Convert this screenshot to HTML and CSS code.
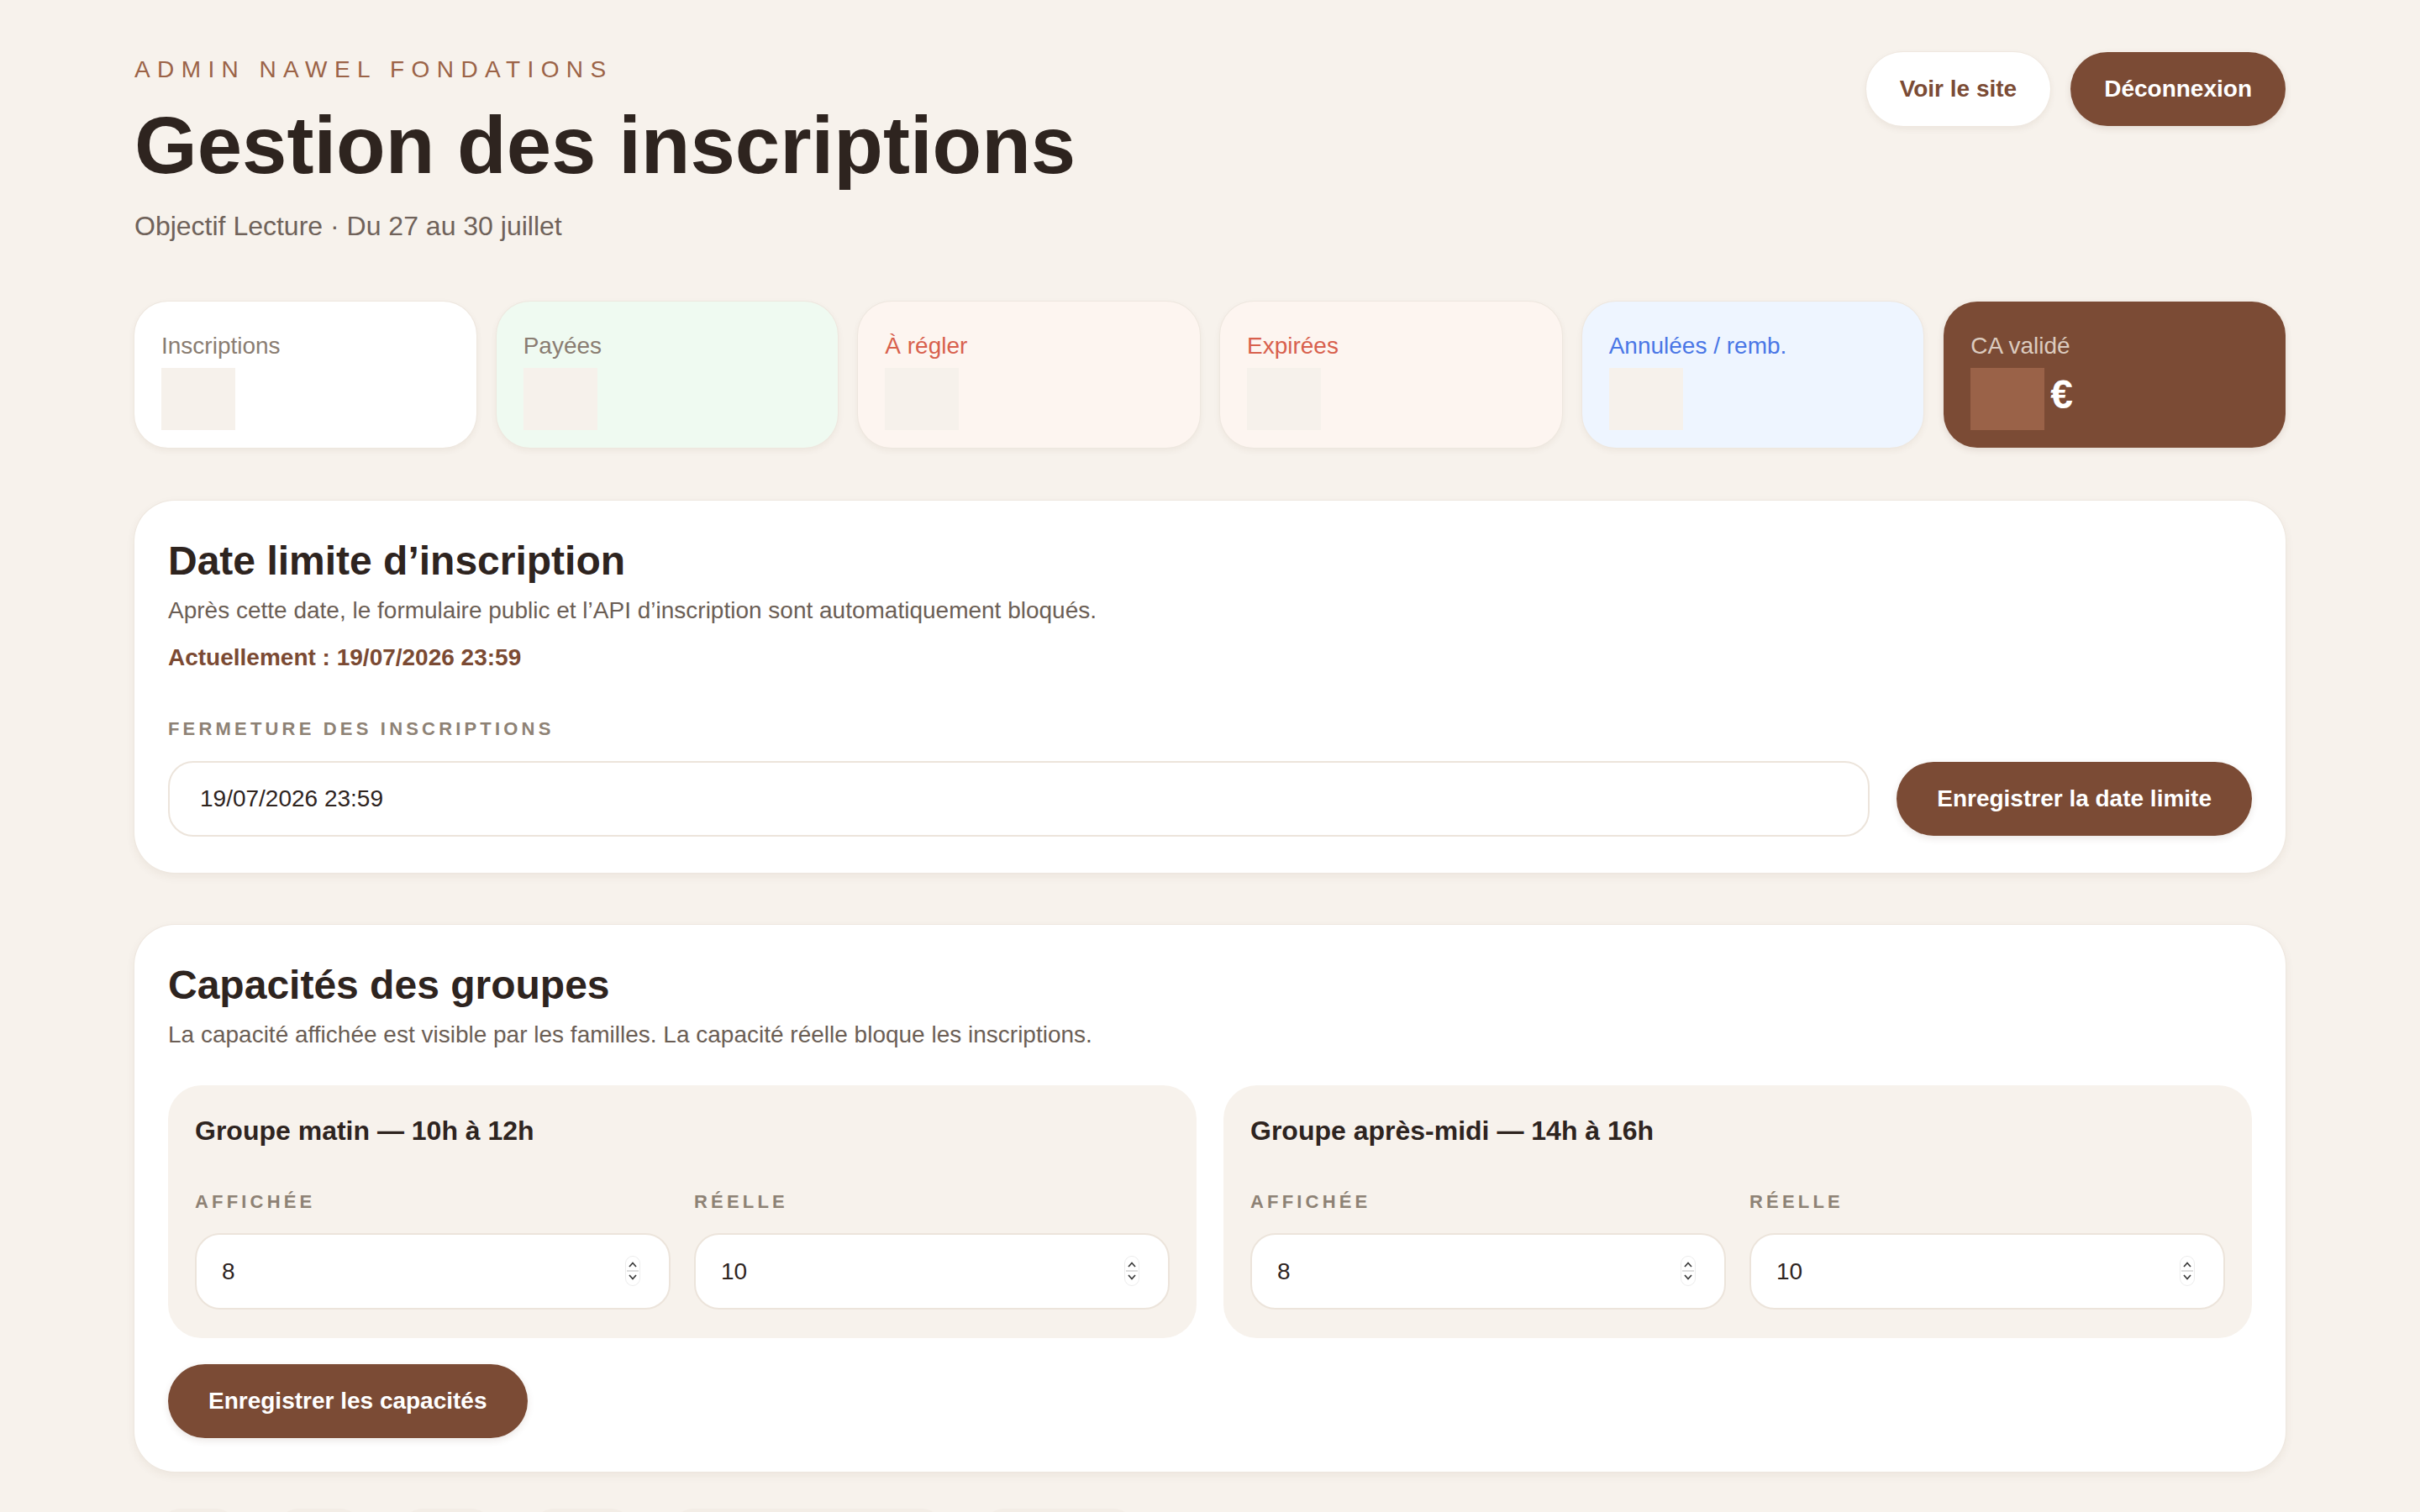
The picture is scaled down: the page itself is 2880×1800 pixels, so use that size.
FILE: index.html
```html
<!DOCTYPE html>
<html lang="fr">
<head>
<meta charset="utf-8">
<title>Gestion des inscriptions</title>
<link rel="stylesheet" href="styles.css">
</head>
<body>
<div class="page">
  <header class="header">
    <div class="header-text">
      <div class="eyebrow">ADMIN NAWEL FONDATIONS</div>
      <h1 class="title">Gestion des inscriptions</h1>
      <p class="subtitle">Objectif Lecture · Du 27 au 30 juillet</p>
    </div>
    <div class="header-actions">
      <a class="btn btn-light">Voir le site</a>
      <a class="btn btn-dark">Déconnexion</a>
    </div>
  </header>

  <section class="stats">
    <div class="stat stat-white"><div class="stat-label">Inscriptions</div><div class="stat-value"><span class="skeleton"></span></div></div>
    <div class="stat stat-green"><div class="stat-label">Payées</div><div class="stat-value"><span class="skeleton"></span></div></div>
    <div class="stat stat-peach stat-red"><div class="stat-label">À régler</div><div class="stat-value"><span class="skeleton"></span></div></div>
    <div class="stat stat-peach stat-red"><div class="stat-label">Expirées</div><div class="stat-value"><span class="skeleton"></span></div></div>
    <div class="stat stat-blue"><div class="stat-label">Annulées / remb.</div><div class="stat-value"><span class="skeleton"></span></div></div>
    <div class="stat stat-brown"><div class="stat-label">CA validé</div><div class="stat-value"><span class="skeleton"></span><span class="euro">€</span></div></div>
  </section>

  <section class="card card-deadline">
    <h2 class="card-title">Date limite d’inscription</h2>
    <p class="card-desc">Après cette date, le formulaire public et l’API d’inscription sont automatiquement bloqués.</p>
    <p class="current">Actuellement : 19/07/2026 23:59</p>
    <div class="deadline-form">
      <label class="field-label">FERMETURE DES INSCRIPTIONS</label>
      <div class="deadline-row">
        <input class="input input-date" type="text" value="19/07/2026 23:59">
        <button class="btn btn-dark btn-wide">Enregistrer la date limite</button>
      </div>
    </div>
  </section>

  <section class="card card-groups">
    <h2 class="card-title">Capacités des groupes</h2>
    <p class="card-desc">La capacité affichée est visible par les familles. La capacité réelle bloque les inscriptions.</p>
    <div class="groups">
      <div class="group">
        <h3 class="group-title">Groupe matin — 10h à 12h</h3>
        <div class="fields">
          <div class="field">
            <label class="field-label">AFFICHÉE</label>
            <div class="num-wrap">
              <input class="input input-num" type="number" value="8">
              <svg class="spin" width="18" height="36" viewBox="0 0 18 36"><rect x="0.5" y="0.5" width="17" height="35" rx="8.5" fill="#fff" stroke="#ececec"/><path d="M5 13 L9 8.5 L13 13" fill="none" stroke="#3a3a3a" stroke-width="1.7"/><line x1="2" y1="18" x2="16" y2="18" stroke="#dedede" stroke-width="2"/><path d="M5 23 L9 27.5 L13 23" fill="none" stroke="#3a3a3a" stroke-width="1.7"/></svg>
            </div>
          </div>
          <div class="field">
            <label class="field-label">RÉELLE</label>
            <div class="num-wrap">
              <input class="input input-num" type="number" value="10">
              <svg class="spin" width="18" height="36" viewBox="0 0 18 36"><rect x="0.5" y="0.5" width="17" height="35" rx="8.5" fill="#fff" stroke="#ececec"/><path d="M5 13 L9 8.5 L13 13" fill="none" stroke="#3a3a3a" stroke-width="1.7"/><line x1="2" y1="18" x2="16" y2="18" stroke="#dedede" stroke-width="2"/><path d="M5 23 L9 27.5 L13 23" fill="none" stroke="#3a3a3a" stroke-width="1.7"/></svg>
            </div>
          </div>
        </div>
      </div>
      <div class="group">
        <h3 class="group-title">Groupe après-midi — 14h à 16h</h3>
        <div class="fields">
          <div class="field">
            <label class="field-label">AFFICHÉE</label>
            <div class="num-wrap">
              <input class="input input-num" type="number" value="8">
              <svg class="spin" width="18" height="36" viewBox="0 0 18 36"><rect x="0.5" y="0.5" width="17" height="35" rx="8.5" fill="#fff" stroke="#ececec"/><path d="M5 13 L9 8.5 L13 13" fill="none" stroke="#3a3a3a" stroke-width="1.7"/><line x1="2" y1="18" x2="16" y2="18" stroke="#dedede" stroke-width="2"/><path d="M5 23 L9 27.5 L13 23" fill="none" stroke="#3a3a3a" stroke-width="1.7"/></svg>
            </div>
          </div>
          <div class="field">
            <label class="field-label">RÉELLE</label>
            <div class="num-wrap">
              <input class="input input-num" type="number" value="10">
              <svg class="spin" width="18" height="36" viewBox="0 0 18 36"><rect x="0.5" y="0.5" width="17" height="35" rx="8.5" fill="#fff" stroke="#ececec"/><path d="M5 13 L9 8.5 L13 13" fill="none" stroke="#3a3a3a" stroke-width="1.7"/><line x1="2" y1="18" x2="16" y2="18" stroke="#dedede" stroke-width="2"/><path d="M5 23 L9 27.5 L13 23" fill="none" stroke="#3a3a3a" stroke-width="1.7"/></svg>
            </div>
          </div>
        </div>
      </div>
    </div>
    <button class="btn btn-dark btn-wide btn-save">Enregistrer les capacités</button>
  </section>

  <nav class="filters">
    <span class="pill"></span><span class="pill pill-2"></span><span class="pill pill-3"></span><span class="pill pill-4"></span><span class="pill pill-5"></span><span class="pill pill-6"></span>
  </nav>
</div>
</body>
</html>
```

FILE: styles.css
```css
* { box-sizing: border-box; }

html, body {
  margin: 0;
  padding: 0;
  background: #f7f2ec;
}

body {
  font-family: "Liberation Sans", Arial, Helvetica, sans-serif;
  color: #2e241f;
}

.page {
  padding: 62px 160px 0;
}

/* Header */
.header {
  display: flex;
  justify-content: space-between;
  align-items: flex-start;
}

.eyebrow {
  font-size: 28px;
  line-height: 42px;
  letter-spacing: 0.3em;
  color: #9b6347;
}

.title {
  margin: 14px 0 0;
  font-size: 96px;
  line-height: 110px;
  font-weight: 700;
  color: #2e241f;
}

.subtitle {
  margin: 17px 0 0;
  font-size: 32px;
  line-height: 48px;
  color: #6f625a;
}

.header-actions {
  display: flex;
  gap: 24px;
}

.btn {
  display: inline-block;
  border: none;
  border-radius: 999px;
  font-family: "Liberation Sans", Arial, Helvetica, sans-serif;
  font-size: 28px;
  font-weight: 700;
  line-height: 40px;
  padding: 24px 40px;
  cursor: pointer;
  text-decoration: none;
  white-space: nowrap;
}

.btn-light {
  background: #ffffff;
  color: #7b4b35;
  box-shadow: 0 0 0 1px #efe8e0, 0 3px 8px rgba(80, 50, 30, 0.08);
}

.btn-dark {
  background: #7b4b35;
  color: #ffffff;
  box-shadow: 0 3px 8px rgba(80, 50, 30, 0.12);
}

.btn-wide {
  padding: 24px 48px;
}

/* Stats */
.stats {
  margin-top: 66px;
  display: grid;
  grid-template-columns: repeat(6, 1fr);
  gap: 24px;
}

.stat {
  border-radius: 40px;
  padding: 32px 32px 21px;
  background: #ffffff;
  box-shadow: 0 0 0 1px #eee7df, 0 3px 8px rgba(80, 50, 30, 0.07);
}

.stat-label {
  font-size: 28px;
  line-height: 42px;
  color: #8a7d72;
}

.stat-value {
  margin-top: 5px;
  display: flex;
  align-items: center;
  gap: 7px;
  font-size: 48px;
  font-weight: 700;
  color: #ffffff;
}

.skeleton {
  display: block;
  width: 88px;
  height: 74px;
  background: #f6f1eb;
}

.stat-green { background: #effaf1; }
.stat-peach { background: #fdf5f0; }
.stat-red .stat-label { color: #d8604d; }
.stat-blue { background: #eef5ff; }
.stat-blue .stat-label { color: #4a77e6; }

.stat-brown {
  background: #7b4b35;
  box-shadow: 0 3px 8px rgba(80, 50, 30, 0.12);
}
.stat-brown .stat-label { color: #dccbbf; }
.stat-brown .skeleton { background: #9a6248; }

.euro {
  line-height: 56px;
  margin-bottom: 10px;
}

/* Cards */
.card {
  background: #ffffff;
  border-radius: 48px;
  padding: 41px 40px 41px;
  box-shadow: 0 0 0 1px #eee7df, 0 4px 12px rgba(80, 50, 30, 0.07);
}

.card-deadline {
  margin-top: 63px;
  padding-bottom: 43px;
}

.card-groups {
  margin-top: 62px;
  padding-bottom: 40px;
}

.card-title {
  margin: 0;
  font-size: 48px;
  line-height: 62px;
  font-weight: 700;
  color: #2e241f;
}

.card-desc {
  margin: 7px 0 0;
  font-size: 28px;
  line-height: 42px;
  color: #6b5e55;
}

.current {
  margin: 14px 0 0;
  font-size: 28px;
  line-height: 42px;
  font-weight: 700;
  color: #7b4a33;
}

.deadline-form {
  margin-top: 48px;
}

.field-label {
  display: block;
  font-size: 22px;
  line-height: 31px;
  font-weight: 700;
  letter-spacing: 0.19em;
  color: #8e8275;
}

.deadline-row {
  margin-top: 23px;
  display: flex;
  align-items: center;
  gap: 32px;
}

.input {
  display: block;
  width: 100%;
  height: 90px;
  border: 2px solid #ece4db;
  border-radius: 30px;
  background: #ffffff;
  font-family: "Liberation Sans", Arial, Helvetica, sans-serif;
  font-size: 28px;
  color: #2e241f;
  outline: none;
}

.input-date {
  flex: 1;
  padding: 0 36px;
}

.input-num {
  height: 91px;
  padding: 0 30px;
  -moz-appearance: textfield;
  appearance: textfield;
}

.input-num::-webkit-inner-spin-button,
.input-num::-webkit-outer-spin-button {
  -webkit-appearance: none;
  margin: 0;
}

/* Groups */
.groups {
  margin-top: 39px;
  display: grid;
  grid-template-columns: 1fr 1fr;
  gap: 32px;
}

.group {
  background: #f7f2ec;
  border-radius: 40px;
  padding: 32px 32px 34px;
}

.group-title {
  margin: 0;
  font-size: 32px;
  line-height: 45px;
  font-weight: 700;
  color: #2e241f;
}

.fields {
  margin-top: 46px;
  display: grid;
  grid-template-columns: 1fr 1fr;
  gap: 28px;
}

.field .field-label {
  margin-bottom: 22px;
}

.num-wrap {
  position: relative;
}

.spin {
  position: absolute;
  right: 36px;
  top: 27px;
}

.btn-save {
  margin-top: 31px;
}

/* Next section (partially visible) */
.filters {
  margin-top: 44px;
  display: flex;
  gap: 40px;
  padding-left: 26px;
}

.pill {
  display: block;
  width: 100px;
  height: 60px;
  border-radius: 30px;
  background: #f3ede6;
}
.pill-2 { width: 108px; }
.pill-3 { width: 116px; }
.pill-4 { width: 126px; }
.pill-5 { width: 330px; }
.pill-6 { width: 188px; }
```
